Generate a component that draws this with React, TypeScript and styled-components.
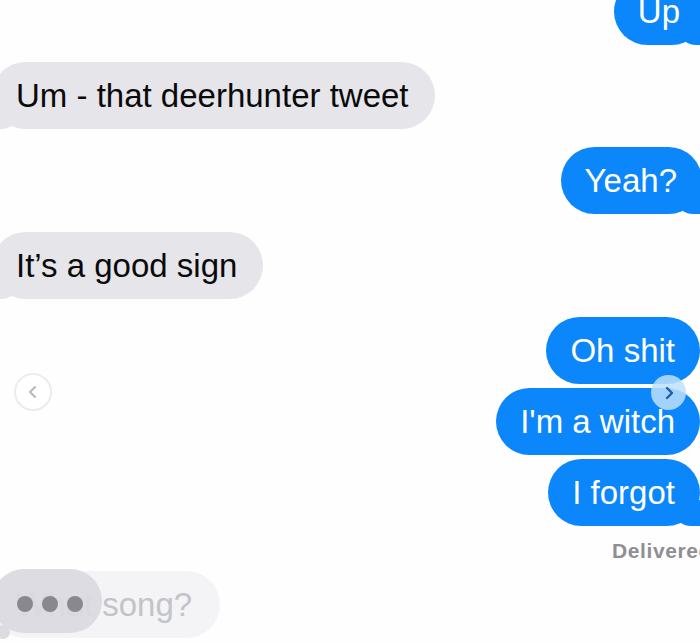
import React from 'react';
import styled, { createGlobalStyle, css } from 'styled-components';

const GlobalStyle = createGlobalStyle`
  html, body {
    margin: 0;
    padding: 0;
    background: #ffffff;
  }
  body {
    font-family: "Liberation Sans", Arial, sans-serif;
  }
`;

const BLUE = '#0b86fb';
const GREY = '#e5e5ea';
const PAGE = '#fefefe';

const Screen = styled.div`
  position: relative;
  width: 700px;
  height: 643px;
  overflow: hidden;
  background: ${PAGE};
`;

const Thread = styled.div`
  display: flex;
  flex-direction: column;
  margin-top: -22px;
`;

const Row = styled.div<{ $side: 'me' | 'them'; $gap: number; $shift?: number }>`
  display: flex;
  justify-content: ${p => (p.$side === 'me' ? 'flex-end' : 'flex-start')};
  margin-top: ${p => p.$gap}px;
  ${p =>
    p.$side === 'me'
      ? css`margin-right: ${p.$shift || 0}px;`
      : css`margin-left: -8px;`}
`;

const Bubble = styled.div<{ $side: 'me' | 'them'; $tail?: boolean }>`
  position: relative;
  z-index: 0;
  height: 67px;
  box-sizing: border-box;
  padding: ${p => (p.$side === 'me' ? '0 25px 0 24px' : '0 26px 0 24px')};
  display: flex;
  align-items: center;
  border-radius: 34px;
  font-size: 33px;
  white-space: nowrap;
  background: ${p => (p.$side === 'me' ? BLUE : GREY)};
  color: ${p => (p.$side === 'me' ? '#ffffff' : '#0a0a0a')};

  ${p =>
    p.$tail &&
    (p.$side === 'me'
      ? css`
          &::before {
            content: '';
            position: absolute;
            z-index: -1;
            right: -7px;
            bottom: 0;
            width: 32px;
            height: 26px;
            background: ${BLUE};
            border-bottom-left-radius: 16px 14px;
          }
          &::after {
            content: '';
            position: absolute;
            z-index: -1;
            right: -26px;
            bottom: 0;
            width: 26px;
            height: 26px;
            background: ${PAGE};
            border-bottom-left-radius: 10px;
          }
        `
      : css`
          &::before {
            content: '';
            position: absolute;
            z-index: -1;
            left: -7px;
            bottom: 0;
            width: 32px;
            height: 26px;
            background: ${GREY};
            border-bottom-right-radius: 16px 14px;
          }
          &::after {
            content: '';
            position: absolute;
            z-index: -1;
            left: -26px;
            bottom: 0;
            width: 26px;
            height: 26px;
            background: ${PAGE};
            border-bottom-right-radius: 10px;
          }
        `)}
`;

const Status = styled.div`
  align-self: flex-end;
  margin-right: -12px;
  margin-top: 13px;
  font-size: 21px;
  font-weight: 700;
  letter-spacing: 0.6px;
  color: #8e8e93;
`;

const TypingRow = styled.div`
  position: relative;
  margin-top: 8px;
  margin-left: -8px;
  display: flex;
`;

const FadedBubble = styled.div`
  height: 67px;
  box-sizing: border-box;
  padding: 0 28px 0 24px;
  display: flex;
  align-items: center;
  border-radius: 34px;
  background: #f4f4f7;
  color: #c3c3c8;
  font-size: 33px;
`;

const TypingBubble = styled.div`
  position: absolute;
  left: 0;
  top: -2px;
  width: 110px;
  height: 64px;
  border-radius: 32px;
  background: rgba(218, 218, 224, 0.94);
  display: flex;
  align-items: center;
  justify-content: center;
  gap: 9px;
  padding: 5px 0 0 5px;
  box-sizing: border-box;

  &::before {
    content: '';
    position: absolute;
    left: 4px;
    bottom: -6px;
    width: 14px;
    height: 14px;
    border-radius: 50%;
    background: rgba(218, 218, 224, 0.94);
  }
`;

const Dot = styled.span`
  width: 16px;
  height: 16px;
  border-radius: 50%;
  background: #88888e;
`;

const NavButton = styled.div<{ $variant: 'prev' | 'next' }>`
  position: absolute;
  z-index: 2;
  display: flex;
  align-items: center;
  justify-content: center;
  border-radius: 50%;
  box-sizing: border-box;
  ${p =>
    p.$variant === 'prev'
      ? css`
          left: 14px;
          top: 373px;
          width: 38px;
          height: 38px;
          background: #ffffff;
          border: 2px solid #ececf0;
        `
      : css`
          left: 651px;
          top: 375px;
          width: 35px;
          height: 35px;
          background: rgba(190, 225, 252, 0.85);
        `}
`;

const Streak = styled.svg`
  position: absolute;
  z-index: 1;
  left: 620px;
  top: 372px;
  width: 80px;
  height: 26px;
`;

const messages: { side: 'me' | 'them'; text: string; gap: number; tail?: boolean; shift?: number }[] = [
  { side: 'me', text: 'Up', gap: 0, tail: true, shift: -5 },
  { side: 'them', text: 'Um - that deerhunter tweet', gap: 17, tail: true },
  { side: 'me', text: 'Yeah?', gap: 18, tail: true, shift: -2 },
  { side: 'them', text: 'It\u2019s a good sign', gap: 18, tail: true },
  { side: 'me', text: 'Oh shit', gap: 18 },
  { side: 'me', text: "I'm a witch", gap: 4 },
  { side: 'me', text: 'I forgot', gap: 4, tail: true },
];

export default function App() {
  return (
    <>
      <GlobalStyle />
      <Screen>
        <Thread>
          {messages.map((m, i) => (
            <Row key={i} $side={m.side} $gap={m.gap} $shift={m.shift}>
              <Bubble $side={m.side} $tail={m.tail}>
                {m.text}
              </Bubble>
            </Row>
          ))}
          <Status>Delivered</Status>
          <TypingRow>
            <FadedBubble>What song?</FadedBubble>
            <TypingBubble>
              <Dot />
              <Dot />
              <Dot />
            </TypingBubble>
          </TypingRow>
        </Thread>

        <Streak viewBox="0 0 80 26">
          <path d="M0 13 L62 12.5 L80 3 L80 23 L62 13.5 Z" fill="#ffffff" opacity="0.9" />
        </Streak>

        <NavButton $variant="prev">
          <svg width="14" height="16" viewBox="0 0 14 16">
            <path d="M9 3 L4 8 L9 13" fill="none" stroke="#b6b6bd" strokeWidth="2" strokeLinecap="round" strokeLinejoin="round" />
          </svg>
        </NavButton>
        <NavButton $variant="next">
          <svg width="14" height="16" viewBox="0 0 14 16">
            <path d="M5 3 L10 8 L5 13" fill="none" stroke="#1e5fa6" strokeWidth="2.4" strokeLinecap="round" strokeLinejoin="round" />
          </svg>
        </NavButton>
      </Screen>
    </>
  );
}
